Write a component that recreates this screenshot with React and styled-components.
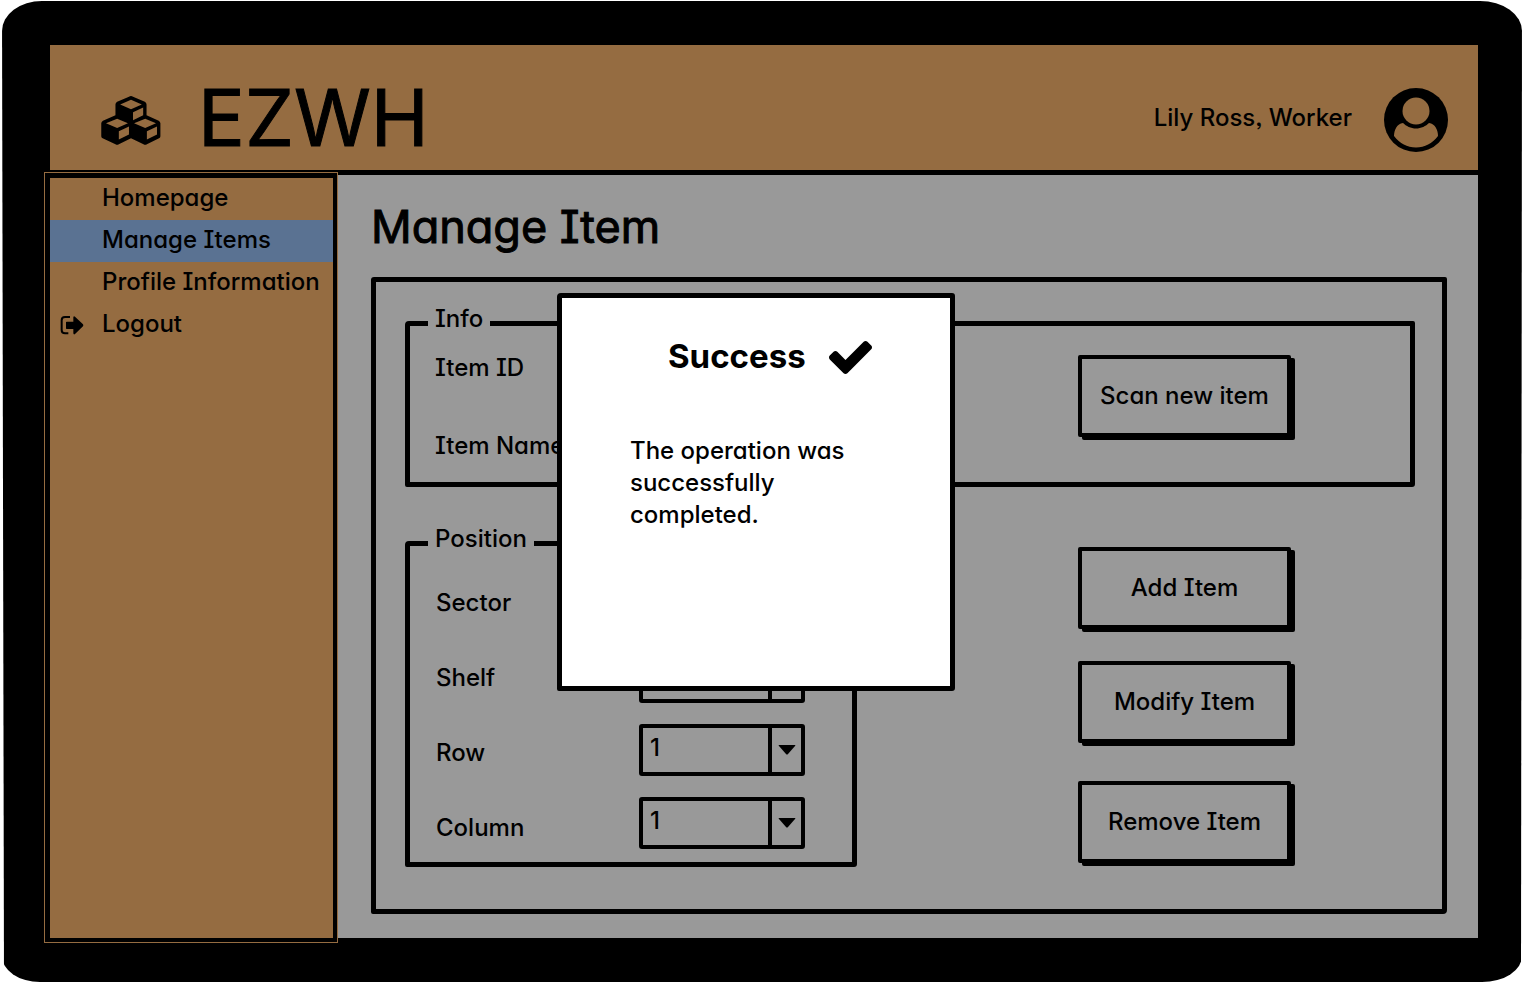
import React from 'react';
import styled, { createGlobalStyle } from 'styled-components';

const ink = '#000';
const wood = '#956c41';
const paper = '#999';
const highlight = '#5a7292';

const GlobalStyle = createGlobalStyle`
  *, *::before, *::after { box-sizing: border-box; }
  body {
    margin: 0;
    background: #fff;
    color: ${ink};
    font-family: Inter, "Open Sans", sans-serif;
    font-feature-settings: "cv08", "cv11", "ss03";
    font-size: 24px;
    font-weight: 500;
    line-height: 32px;
  }
  button, select { font: inherit; font-feature-settings: inherit; color: inherit; }
`;

const Page = styled.div`
  display: flex;
  min-height: 100vh;
  padding: 1px 2px 2px;
`;

const Device = styled.div`
  position: relative;
  flex: 1;
  display: flex;
  flex-direction: column;
  padding: 44px 44px 44px 48px;
  background: ${ink};
  border-radius: 40px 42px 40px 38px / 30px 30px 26px 26px;
  clip-path: polygon(0 0, 100% 0, calc(100% - 1px) 100%, 2px 100%);
`;

const Header = styled.header`
  display: flex;
  align-items: center;
  height: 125px;
  padding: 25px 30px 0 51px;
  background: ${wood};
`;

const Brand = styled.div`
  display: flex;
  align-items: center;
  gap: 37px;
  margin-right: auto;
`;

const BrandName = styled.span`
  padding-bottom: 4px;
  font-size: 78px;
  line-height: 92px;
  font-weight: 400;
  -webkit-text-stroke: 1px ${ink};
`;

const UserName = styled.span`
  margin-right: 32px;
  padding-bottom: 4px;
`;

const Body = styled.div`
  flex: 1;
  display: flex;
`;

const Sidebar = styled.aside`
  width: 294px;
  margin: 2px 0 -5px -6px;
  border: 1px solid ${wood};
  background: ${ink};
  padding: 5px 4px 4px 5px;
  display: flex;
`;

const Nav = styled.nav`
  flex: 1;
  display: flex;
  flex-direction: column;
  background: ${wood};
`;

const NavLink = styled.a`
  display: grid;
  grid-template-columns: 42px 1fr;
  align-items: center;
  height: 42px;
  padding: 0 0 0 10px;
  color: inherit;
  text-decoration: none;
  white-space: nowrap;
  background: ${({ $active }) => ($active ? highlight : 'transparent')};
`;

const NavText = styled.span`
  grid-column: 2;
  padding-bottom: 2px;
`;

const Main = styled.main`
  flex: 1;
  display: flex;
  flex-direction: column;
  margin-top: 5px;
  padding: 24px 31px 24px 33px;
  background: ${paper};
`;

const Title = styled.h1`
  margin: 0 0 22px;
  font-size: 45px;
  line-height: 56px;
  font-weight: 400;
  -webkit-text-stroke: 1px ${ink};
`;

const Panel = styled.section`
  flex: 1;
  padding: 20px 27px 0 29px;
  border: 5px solid ${ink};
  border-radius: 3px 2px 4px 2px;
`;

const Group = styled.fieldset`
  display: block;
  min-width: 0;
  margin: 0;
  padding: 0;
  border: 5px solid ${ink};
  border-radius: 4px 2px 3px 2px;
`;

const GroupTitle = styled.legend`
  margin-left: 18px;
  padding: 1px 7px 9px;
`;

const InfoRow = styled.div`
  display: flex;
  justify-content: space-between;
  align-items: flex-start;
  padding: 0 119px 20px 25px;
`;

const InfoLabels = styled.div`
  display: flex;
  flex-direction: column;
  gap: 46px;
  padding-top: 8px;
`;

const LowerRow = styled.div`
  display: flex;
  justify-content: space-between;
  align-items: flex-end;
  margin-top: 35px;
`;

const PositionFields = styled.div`
  display: flex;
  justify-content: space-between;
  align-items: flex-end;
  width: 442px;
  padding: 14px 47px 13px 26px;
`;

const LabelColumn = styled.div`
  display: flex;
  flex-direction: column;
  gap: 43px;
  padding-bottom: 5px;
`;

const SelectColumn = styled.div`
  display: flex;
  flex-direction: column;
  gap: 21px;
`;

const SelectBox = styled.div`
  display: grid;
  width: 166px;
  height: 52px;
`;

const Select = styled.select`
  grid-area: 1 / 1;
  appearance: none;
  padding: 0 40px 4px 7px;
  border: 4px solid ${ink};
  border-radius: 3px;
  background: transparent;
`;

const SelectArrow = styled.span`
  grid-area: 1 / 1;
  justify-self: end;
  display: grid;
  place-items: center;
  width: 37px;
  padding-right: 4px;
  border-left: 4px solid ${ink};
  pointer-events: none;
`;

const Button = styled.button`
  width: 213px;
  height: 82px;
  padding: 0;
  border: 4px solid ${ink};
  border-radius: 2px;
  background: ${paper};
  box-shadow: 4px 3px 0 ${ink};
  white-space: nowrap;
`;

const ScanSlot = styled.div`
  padding-top: 11px;
`;

const Actions = styled.div`
  display: flex;
  flex-direction: column;
  gap: 32px;
  padding: 0 124px 4px 0;

  ${Button}:last-child { margin-top: 6px; }
`;

const Overlay = styled.div`
  position: absolute;
  inset: 0;
  display: flex;
  align-items: center;
  justify-content: center;
  padding-right: 12px;
`;

const Dialog = styled.div`
  width: 398px;
  height: 398px;
  padding: 36px 68px;
  border: 5px solid ${ink};
  border-radius: 4px 3px 3px 2px;
  background: #fff;
`;

const DialogHeading = styled.div`
  display: flex;
  align-items: center;
  gap: 23px;
  padding-left: 38px;
`;

const DialogTitle = styled.h2`
  margin: 0;
  padding-bottom: 4px;
  font-size: 33px;
  line-height: 44px;
  font-weight: 700;
`;

const DialogText = styled.p`
  width: 232px;
  margin: 53px 0 0;
`;

const CubesIcon = () => (
  <svg width="60" height="49" viewBox="36 36 176 145" aria-hidden="true">
    <path
      fill={ink}
      d="M124 36 Q127 36 130 38 L165 53 Q170 56 170 61 V93 L206 109 Q211 112 211 117 V155 Q211 159 207 161 L171 179 Q166 182 161 179 L124 161 L88 179 Q83 182 78 179 L40 161 Q36 159 36 155 V117 Q36 112 41 109 L78 93 V61 Q78 56 83 53 L118 38 Q121 36 124 36Z"
    />
    <path
      fill={wood}
      d="M124 47 L156 61 L124 75 L92 61Z M130 84 L160 70 V93 L130 108Z M83 103 L115 117 L83 131 L50 117Z M88 140 L118 126 V150 L88 165Z M166 103 L198 117 L166 131 L133 117Z M171 140 L201 126 V150 L171 165Z"
    />
  </svg>
);

const UserIcon = () => (
  <svg width="64" height="64" viewBox="0 0 64 64" aria-hidden="true">
    <circle cx="32" cy="32" r="32" fill={ink} />
    <circle cx="32" cy="23" r="13.5" fill={wood} />
    <path
      fill={wood}
      d="M10 48 C10 42 13 35.500 19 35 C22 38 27 40.500 32 40.500 C37 40.500 42 38 45 35 C51 35.500 54 42 54 48 C48 55.500 41 59.500 32 59.500 C23 59.500 16 55.500 10 48Z"
    />
  </svg>
);

const LogoutIcon = () => (
  <svg width="24" height="20" viewBox="178 943 72 60" aria-hidden="true">
    <path fill="none" stroke={ink} strokeWidth="6" d="M208 949 H193 Q183 949 183 959 V988 Q183 998 193 998 H203" />
    <path fill={ink} d="M198 963 H218 V950 Q219 945 223 948 L247 971 Q249 974 247 977 L223 1000 Q219 1003 218 998 V985 H198 Q196 985 196 983 V965 Q196 963 198 963Z" />
  </svg>
);

const CheckIcon = () => (
  <svg width="43" height="33" viewBox="121 334 1550 1188" aria-hidden="true">
    <path
      fill={ink}
      d="M1671 566q0 40-28 68l-724 724-136 136q-28 28-68 28t-68-28l-136-136-362-362q-28-28-28-68t28-68l136-136q28-28 68-28t68 28l294 295 656-657q28-28 68-28t68 28l136 136q28 28 28 68z"
    />
  </svg>
);

const NAV = [
  { label: 'Homepage' },
  { label: 'Manage Items', active: true },
  { label: 'Profile Information' },
  { label: 'Logout', icon: <LogoutIcon /> },
];

const POSITION = ['Sector', 'Shelf', 'Row', 'Column'];

export default function App() {
  return (
    <>
      <GlobalStyle />
      <Page>
        <Device>
          <Header>
            <Brand>
              <CubesIcon />
              <BrandName>EZWH</BrandName>
            </Brand>
            <UserName>Lily Ross, Worker</UserName>
            <UserIcon />
          </Header>
          <Body>
            <Sidebar>
              <Nav>
                {NAV.map(({ label, active, icon }) => (
                  <NavLink key={label} href="#" $active={active}>
                    {icon}
                    <NavText>{label}</NavText>
                  </NavLink>
                ))}
              </Nav>
            </Sidebar>
            <Main>
              <Title>Manage Item</Title>
              <Panel>
                <Group>
                  <GroupTitle>Info</GroupTitle>
                  <InfoRow>
                    <InfoLabels>
                      <span>Item ID</span>
                      <span>Item Name</span>
                    </InfoLabels>
                    <ScanSlot>
                      <Button type="button">Scan new item</Button>
                    </ScanSlot>
                  </InfoRow>
                </Group>
                <LowerRow>
                  <Group>
                    <GroupTitle>Position</GroupTitle>
                    <PositionFields>
                      <LabelColumn>
                        {POSITION.map((name) => (
                          <label key={name} htmlFor={name}>{name}</label>
                        ))}
                      </LabelColumn>
                      <SelectColumn>
                        {POSITION.map((name) => (
                          <SelectBox key={name}>
                            <Select id={name} defaultValue="1">
                              <option>1</option>
                            </Select>
                            <SelectArrow>
                              <svg width="18" height="10" viewBox="0 0 18 10" aria-hidden="true">
                                <path fill={ink} d="M1 0 H17 Q18 0 17 1 L10 9 Q9 10 8 9 L1 1 Q0 0 1 0Z" />
                              </svg>
                            </SelectArrow>
                          </SelectBox>
                        ))}
                      </SelectColumn>
                    </PositionFields>
                  </Group>
                  <Actions>
                    <Button type="button">Add Item</Button>
                    <Button type="button">Modify Item</Button>
                    <Button type="button">Remove Item</Button>
                  </Actions>
                </LowerRow>
              </Panel>
            </Main>
          </Body>
          <Overlay>
            <Dialog role="dialog" aria-labelledby="dialog-title">
              <DialogHeading>
                <DialogTitle id="dialog-title">Success</DialogTitle>
                <CheckIcon />
              </DialogHeading>
              <DialogText>The operation was successfully completed.</DialogText>
            </Dialog>
          </Overlay>
        </Device>
      </Page>
    </>
  );
}
